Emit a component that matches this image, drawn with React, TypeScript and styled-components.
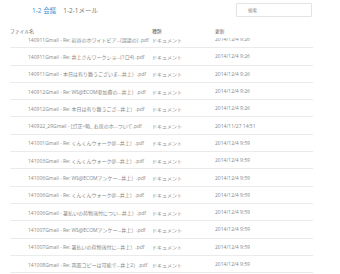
import styled, { createGlobalStyle } from "styled-components";

const GlobalStyle = createGlobalStyle`
  html, body {
    margin: 0;
    padding: 0;
    background: #ffffff;
  }
  body {
    font-family: "Open Sans", "Noto Sans CJK JP", sans-serif;
  }
`;

const files = [
  { name: "140911Gmail - Re: 岩谷のホワイトビア...(論議の) .pdf", date: "2014/12/4 9:26" },
  { name: "140911Gmail - Re: 井上さんワークショ...(1ロ4) .pdf", date: "2014/12/4 9:26" },
  { name: "140911Gmail - 本日は有り難うございま...井上）.pdf", date: "2014/12/4 9:26" },
  { name: "140912Gmail - Re: WS@ECOM参加費の...井上）.pdf", date: "2014/12/4 9:26" },
  { name: "140912Gmail - Re: 本日は有り難うござ...井上）.pdf", date: "2014/12/4 9:26" },
  { name: "140922_29Gmail - [訂正>略_ お席のホ...ついて.pdf", date: "2014/11/27 14:51" },
  { name: "141001Gmail - Re: くんくんウォーク@...井上）.pdf", date: "2014/12/4 9:59" },
  { name: "141003Gmail - Re: くんくんウォーク@...井上）.pdf", date: "2014/12/4 9:59" },
  { name: "141006Gmail - Re: WS@ECOMアンケー...井上）.pdf", date: "2014/12/4 9:59" },
  { name: "141006Gmail - Re: くんくんウォーク@...井上）.pdf", date: "2014/12/4 9:59" },
  { name: "141006Gmail - 暑払いの荷物送付につい...井上）.pdf", date: "2014/12/4 9:59" },
  { name: "141007Gmail - Re: WS@ECOMアンケー...井上）.pdf", date: "2014/12/4 9:59" },
  { name: "141007Gmail - Re: 暑払いの荷物送付に...井上）.pdf", date: "2014/12/4 9:59" },
  { name: "141008Gmail - Re: 両面コピーは可能で...井上2）.pdf", date: "2014/12/4 9:59" },
];

const App = () => {
  return (
    <Page>
      <GlobalStyle />
      <TopBar>
        <Breadcrumb>
          <Current>1-2 会議</Current>
          <Sub>1-2-1メール</Sub>
        </Breadcrumb>
        <SearchBox placeholder="検索" />
      </TopBar>
      <Table>
        <HeaderRow>
          <HeadCell>ファイル名</HeadCell>
          <HeadCell>種類</HeadCell>
          <HeadCell>更新</HeadCell>
        </HeaderRow>
        {/* 一覧は少しスクロールされた状態 */}
        <Body>
          <List>
            {files.map((file, i) => (
              <Row key={i}>
                <NameCell>{file.name}</NameCell>
                <Cell>ドキュメント</Cell>
                <Cell>{file.date}</Cell>
              </Row>
            ))}
          </List>
        </Body>
      </Table>
    </Page>
  );
};

const Page = styled.div`
  width: 340px;
  height: 274px;
  overflow: hidden;
  display: flex;
  flex-direction: column;
`;

const TopBar = styled.div`
  display: flex;
  justify-content: space-between;
  align-items: center;
  height: 20px;
  padding: 0 28px 0 32px;
`;

const Breadcrumb = styled.div`
  display: flex;
  align-items: center;
  gap: 7px;
  font-size: 6.5px;
`;

const Current = styled.span`
  color: #3f8fd2;
`;

const Sub = styled.span`
  color: #777777;
`;

const SearchBox = styled.input`
  box-sizing: border-box;
  width: 76px;
  height: 14px;
  padding: 0 0 0 11px;
  border: 1px solid #e4e4e4;
  border-radius: 1px;
  font-family: "Open Sans", "Noto Sans CJK JP", sans-serif;
  font-size: 4.5px;
  outline: none;

  &::placeholder {
    color: #8a8a8a;
  }
`;

const Table = styled.div`
  display: flex;
  flex-direction: column;
  width: 303px;
  margin-left: 10px;
`;

const columns = "142px 63px 1fr";

const HeaderRow = styled.div`
  display: grid;
  grid-template-columns: ${columns};
  align-items: center;
  height: 16px;
  margin-top: 2px;
`;

const HeadCell = styled.div`
  font-size: 4.8px;
  color: #666666;
  white-space: nowrap;
`;

const Body = styled.div`
  height: 236px;
  overflow: hidden;
`;

const List = styled.div`
  margin-top: -7px;
`;

const Row = styled.div`
  display: grid;
  grid-template-columns: ${columns};
  align-items: center;
  height: 17.3px;
  box-sizing: border-box;
  border-bottom: 1px solid #ebebeb;
`;

const Cell = styled.div`
  font-size: 5px;
  color: #888888;
  white-space: nowrap;
  overflow: hidden;
`;

const NameCell = styled(Cell)`
  padding-left: 18px;
`;

export default App;
